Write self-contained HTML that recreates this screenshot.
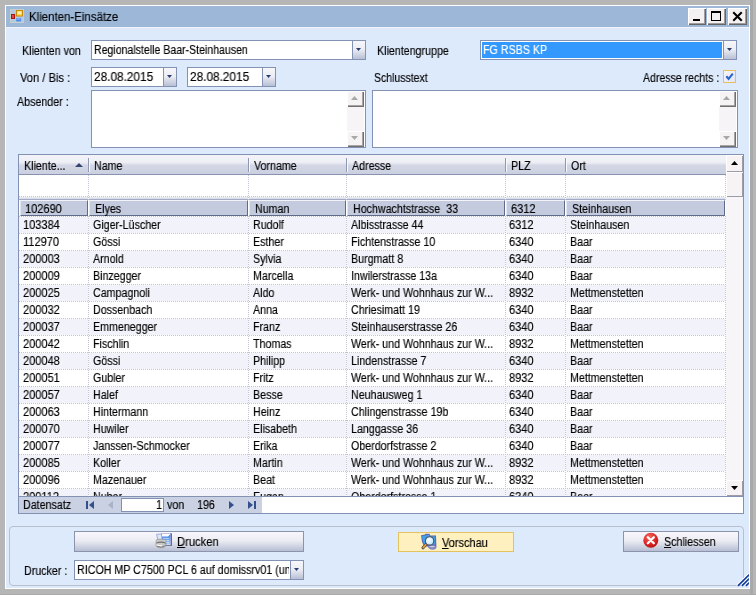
<!DOCTYPE html>
<html lang="de"><head><meta charset="utf-8"><title>Klienten-Einsätze</title>
<style>
html,body{margin:0;padding:0}
body{width:756px;height:595px;position:relative;overflow:hidden;background:#b6b6b6;font-family:"Liberation Sans",sans-serif;font-size:12px;line-height:14px}
div,span.t,svg{position:absolute}
span.t{white-space:pre;transform-origin:0 0;display:block;will-change:transform;-webkit-text-stroke:0.15px currentColor}
u{text-decoration:underline}
</style></head><body>
<div style="left:750px;top:0px;width:3px;height:595px;background:#a9a9a9"></div>
<div style="left:0px;top:594px;width:756px;height:1px;background:#a9a9a9"></div>
<div style="left:5px;top:5px;width:745px;height:584px;background:#fff"></div>
<div style="left:6px;top:6px;width:743px;height:582px;background:#ddeafc"></div>
<div style="left:6px;top:6px;width:743px;height:21px;background:#9cb7d7"></div>
<div style="left:6px;top:27px;width:743px;height:1px;background:#f4f3f9"></div>
<svg style="left:10px;top:9px" width="14" height="14" viewBox="0 0 14 14">
<rect x="0.5" y="0.5" width="13" height="13" fill="#b4c8e0" stroke="#dfe4b8" stroke-dasharray="1 1"/>
<rect x="1.5" y="5.5" width="3" height="4" fill="#e0483c" stroke="#a81810"/>
<rect x="6.5" y="1.5" width="6" height="5.5" fill="#ffd548" stroke="#c48a0c"/>
<rect x="7.6" y="2.5" width="3.6" height="2.6" fill="#fff0b0"/>
<rect x="6.3" y="9.2" width="4.6" height="3.2" fill="#4a86f0"/>
<rect x="7" y="9.6" width="3" height="1" fill="#9cc4ff"/>
</svg>
<span class="t " style="left:29px;top:10px;color:#000;transform:scaleX(0.955);">Klienten-Einsätze</span>
<div style="left:688px;top:8px;width:18px;height:17px;background:#f5f1f3;box-shadow:inset 1px 1px 0 #fff, inset -1px -1px 0 #666, inset -2px -2px 0 #a09c9e"><div style="left:5px;top:11px;width:7px;height:2px;background:#000"></div></div>
<div style="left:707px;top:8px;width:19px;height:17px;background:#f5f1f3;box-shadow:inset 1px 1px 0 #fff, inset -1px -1px 0 #666, inset -2px -2px 0 #a09c9e"><div style="left:4px;top:3px;width:10px;height:10px;border:1px solid #000;border-top-width:2px;box-sizing:border-box"></div></div>
<div style="left:728px;top:8px;width:19px;height:17px;background:#f5f1f3;box-shadow:inset 1px 1px 0 #fff, inset -1px -1px 0 #666, inset -2px -2px 0 #a09c9e"><svg style="left:4px;top:3px" width="11" height="11" viewBox="0 0 11 11"><path d="M2 2 L9 9 M9 2 L2 9" stroke="#000" stroke-width="2.1" stroke-linecap="square" fill="none"/></svg></div>
<span class="t " style="left:21.5px;top:44px;color:#000;transform:scaleX(0.89);">Klienten von</span>
<div style="left:91px;top:40px;width:275px;height:20px;background:#fff;border:1px solid #8392b2;box-sizing:border-box"></div>
<div style="left:352px;top:40px;width:14px;height:20px;border:1px solid #8392b2;box-sizing:border-box;background:linear-gradient(#f6f6fb,#eceef5 45%,#b9c0d5)"><svg style="left:3px;top:7px" width="5" height="3" viewBox="0 0 5 3"><path d="M0 0H5L2.5 3Z" fill="#2c3c6c"/></svg></div>
<div style="left:92px;top:41px;width:259px;height:18px;overflow:hidden">
<span class="t " style="left:2px;top:2px;color:#000;transform:scaleX(0.88);">Regionalstelle Baar-Steinhausen</span>
</div>
<span class="t " style="left:376.5px;top:44px;color:#000;transform:scaleX(0.89);">Klientengruppe</span>
<div style="left:480px;top:40px;width:257px;height:20px;background:#fff;border:1px solid #8392b2;box-sizing:border-box"></div>
<div style="left:723px;top:40px;width:14px;height:20px;border:1px solid #8392b2;box-sizing:border-box;background:linear-gradient(#f6f6fb,#eceef5 45%,#b9c0d5)"><svg style="left:3px;top:7px" width="5" height="3" viewBox="0 0 5 3"><path d="M0 0H5L2.5 3Z" fill="#2c3c6c"/></svg></div>
<div style="left:482px;top:42px;width:240px;height:16px;background:#3399ff"></div>
<div style="left:481px;top:41px;width:241px;height:18px;overflow:hidden">
<span class="t " style="left:2px;top:2px;color:#fff;transform:scaleX(0.89);">FG RSBS KP</span>
</div>
<span class="t " style="left:20px;top:71px;color:#000;transform:scaleX(0.93);">Von / Bis :</span>
<div style="left:91px;top:67px;width:86px;height:20px;background:#fff;border:1px solid #8392b2;box-sizing:border-box"></div>
<div style="left:163px;top:67px;width:14px;height:20px;border:1px solid #8392b2;box-sizing:border-box;background:linear-gradient(#f6f6fb,#eceef5 45%,#b9c0d5)"><svg style="left:3px;top:7px" width="5" height="3" viewBox="0 0 5 3"><path d="M0 0H5L2.5 3Z" fill="#2c3c6c"/></svg></div>
<div style="left:92px;top:68px;width:70px;height:18px;overflow:hidden">
<span class="t " style="left:2px;top:2px;color:#000;transform:scaleX(0.985);">28.08.2015</span>
</div>
<div style="left:187px;top:67px;width:89px;height:20px;background:#fff;border:1px solid #8392b2;box-sizing:border-box"></div>
<div style="left:262px;top:67px;width:14px;height:20px;border:1px solid #8392b2;box-sizing:border-box;background:linear-gradient(#f6f6fb,#eceef5 45%,#b9c0d5)"><svg style="left:3px;top:7px" width="5" height="3" viewBox="0 0 5 3"><path d="M0 0H5L2.5 3Z" fill="#2c3c6c"/></svg></div>
<div style="left:188px;top:68px;width:73px;height:18px;overflow:hidden">
<span class="t " style="left:2px;top:2px;color:#000;transform:scaleX(0.985);">28.08.2015</span>
</div>
<span class="t " style="left:373.5px;top:71px;color:#000;transform:scaleX(0.875);">Schlusstext</span>
<span class="t " style="left:643px;top:71px;color:#000;transform:scaleX(0.88);">Adresse rechts :</span>
<div style="left:723px;top:70px;width:13px;height:13px;background:linear-gradient(135deg,#f6f6fb,#e2e4f0);border:1px solid #e8bf5c;box-sizing:border-box"><svg style="left:1px;top:1px" width="9" height="9" viewBox="0 0 9 9"><path d="M1.3 4.2 L3.6 6.8 L7.8 1.6" stroke="#2a64cc" stroke-width="2.1" fill="none"/></svg></div>
<span class="t " style="left:17.3px;top:94.5px;color:#000;transform:scaleX(0.89);">Absender :</span>
<div style="left:91px;top:90px;width:275px;height:58px;background:#fff;border:1px solid #8392b2;box-sizing:border-box"></div>
<div style="left:347px;top:91px;width:17px;height:56px;background:#f6f4f6"></div>
<div style="left:347px;top:91px;width:17px;height:16px;background:#f6f3f5;box-shadow:inset 1px 1px 0 #fff, inset -1px -1px 0 #707070, inset -2px -2px 0 #a8a4a6"><svg style="left:4px;top:5px" width="7" height="4" viewBox="0 0 7 4"><path d="M0 4H7L3.5 0Z" fill="#a8a8a8"/></svg></div>
<div style="left:347px;top:131px;width:17px;height:16px;background:#f6f3f5;box-shadow:inset 1px 1px 0 #fff, inset -1px -1px 0 #707070, inset -2px -2px 0 #a8a4a6"><svg style="left:4px;top:5px" width="7" height="4" viewBox="0 0 7 4"><path d="M0 0H7L3.5 4Z" fill="#a8a8a8"/></svg></div>
<div style="left:372px;top:90px;width:366px;height:58px;background:#fff;border:1px solid #8392b2;box-sizing:border-box"></div>
<div style="left:719px;top:91px;width:17px;height:56px;background:#f6f4f6"></div>
<div style="left:719px;top:91px;width:17px;height:16px;background:#f6f3f5;box-shadow:inset 1px 1px 0 #fff, inset -1px -1px 0 #707070, inset -2px -2px 0 #a8a4a6"><svg style="left:4px;top:5px" width="7" height="4" viewBox="0 0 7 4"><path d="M0 4H7L3.5 0Z" fill="#a8a8a8"/></svg></div>
<div style="left:719px;top:131px;width:17px;height:16px;background:#f6f3f5;box-shadow:inset 1px 1px 0 #fff, inset -1px -1px 0 #707070, inset -2px -2px 0 #a8a4a6"><svg style="left:4px;top:5px" width="7" height="4" viewBox="0 0 7 4"><path d="M0 0H7L3.5 4Z" fill="#a8a8a8"/></svg></div>
<div style="left:18px;top:154px;width:726px;height:360px;background:#fff;border:1px solid #8392b2;box-sizing:border-box"></div>
<div style="left:19px;top:155px;width:707px;height:20px;background:linear-gradient(#f2f2f8,#efeff6 38%,#d3d7e5 55%,#cbd0e1);border-bottom:1px solid #8893b0;box-sizing:border-box"></div>
<span class="t " style="left:24px;top:159px;color:#000;transform:scaleX(0.89);">Kliente...</span>
<span class="t " style="left:93.5px;top:159px;color:#000;transform:scaleX(0.89);">Name</span>
<div style="left:88px;top:158px;width:1px;height:14px;background:#8f98b2"></div>
<div style="left:89px;top:158px;width:1px;height:14px;background:#f8f9fc"></div>
<span class="t " style="left:253.5px;top:159px;color:#000;transform:scaleX(0.89);">Vorname</span>
<div style="left:248px;top:158px;width:1px;height:14px;background:#8f98b2"></div>
<div style="left:249px;top:158px;width:1px;height:14px;background:#f8f9fc"></div>
<span class="t " style="left:351.5px;top:159px;color:#000;transform:scaleX(0.89);">Adresse</span>
<div style="left:346px;top:158px;width:1px;height:14px;background:#8f98b2"></div>
<div style="left:347px;top:158px;width:1px;height:14px;background:#f8f9fc"></div>
<span class="t " style="left:510.5px;top:159px;color:#000;transform:scaleX(0.89);">PLZ</span>
<div style="left:505px;top:158px;width:1px;height:14px;background:#8f98b2"></div>
<div style="left:506px;top:158px;width:1px;height:14px;background:#f8f9fc"></div>
<span class="t " style="left:570.5px;top:159px;color:#000;transform:scaleX(0.89);">Ort</span>
<div style="left:565px;top:158px;width:1px;height:14px;background:#8f98b2"></div>
<div style="left:566px;top:158px;width:1px;height:14px;background:#f8f9fc"></div>
<svg style="left:75px;top:163px" width="8" height="4" viewBox="0 0 8 4"><path d="M0 4H8L4 0Z" fill="#34446e"/></svg>
<div style="left:19px;top:196px;width:707px;height:1px;background:repeating-linear-gradient(90deg,#c0c4d5 0 1px,#fff 1px 2px)"></div>
<div style="left:19px;top:197px;width:707px;height:3px;background:linear-gradient(#eef0f6,#d5d9e6);border-bottom:1px solid #a2abc4;box-sizing:border-box"></div>
<div style="left:19px;top:200px;width:707px;height:296px;overflow:hidden">
<div style="left:0px;top:16px;width:707px;height:1px;background:repeating-linear-gradient(90deg,#c0c4d5 0 1px,#fff 1px 2px)"></div>
<div style="left:1px;top:0px;width:68px;height:16px;background:#c4cbdf;box-sizing:border-box;border-top:1px solid #f2f4f9;border-left:1px solid #e4e7f0;border-right:1px solid #5f6b88;border-bottom:1px solid #5f6b88"></div>
<span class="t " style="left:6px;top:2px;color:#000;transform:scaleX(0.92);">102690</span>
<div style="left:70px;top:0px;width:159px;height:16px;background:#c4cbdf;box-sizing:border-box;border-top:1px solid #f2f4f9;border-left:1px solid #e4e7f0;border-right:1px solid #5f6b88;border-bottom:1px solid #5f6b88"></div>
<span class="t " style="left:75.7px;top:2px;color:#000;transform:scaleX(0.89);">Elyes</span>
<div style="left:230px;top:0px;width:97px;height:16px;background:#c4cbdf;box-sizing:border-box;border-top:1px solid #f2f4f9;border-left:1px solid #e4e7f0;border-right:1px solid #5f6b88;border-bottom:1px solid #5f6b88"></div>
<span class="t " style="left:235.7px;top:2px;color:#000;transform:scaleX(0.89);">Numan</span>
<div style="left:328px;top:0px;width:158px;height:16px;background:#c4cbdf;box-sizing:border-box;border-top:1px solid #f2f4f9;border-left:1px solid #e4e7f0;border-right:1px solid #5f6b88;border-bottom:1px solid #5f6b88"></div>
<span class="t " style="left:333.7px;top:2px;color:#000;transform:scaleX(0.89);">Hochwachtstrasse  33</span>
<div style="left:487px;top:0px;width:59px;height:16px;background:#c4cbdf;box-sizing:border-box;border-top:1px solid #f2f4f9;border-left:1px solid #e4e7f0;border-right:1px solid #5f6b88;border-bottom:1px solid #5f6b88"></div>
<span class="t " style="left:492px;top:2px;color:#000;transform:scaleX(0.92);">6312</span>
<div style="left:547px;top:0px;width:159px;height:16px;background:#c4cbdf;box-sizing:border-box;border-top:1px solid #f2f4f9;border-left:1px solid #e4e7f0;border-right:1px solid #5f6b88;border-bottom:1px solid #5f6b88"></div>
<span class="t " style="left:552.7px;top:2px;color:#000;transform:scaleX(0.89);">Steinhausen</span>
<div style="left:0px;top:17px;width:707px;height:16px;background:#f2f2fa"></div>
<div style="left:0px;top:33px;width:707px;height:1px;background:repeating-linear-gradient(90deg,#c0c4d5 0 1px,#fff 1px 2px)"></div>
<span class="t " style="left:4.3px;top:18px;color:#000;transform:scaleX(0.92);">103384</span>
<span class="t " style="left:74px;top:18px;color:#000;transform:scaleX(0.89);">Giger-Lüscher</span>
<span class="t " style="left:234px;top:18px;color:#000;transform:scaleX(0.89);">Rudolf</span>
<span class="t " style="left:332px;top:18px;color:#000;transform:scaleX(0.89);">Albisstrasse 44</span>
<span class="t " style="left:490.3px;top:18px;color:#000;transform:scaleX(0.92);">6312</span>
<span class="t " style="left:551px;top:18px;color:#000;transform:scaleX(0.89);">Steinhausen</span>
<div style="left:0px;top:50px;width:707px;height:1px;background:repeating-linear-gradient(90deg,#c0c4d5 0 1px,#fff 1px 2px)"></div>
<span class="t " style="left:4.3px;top:35px;color:#000;transform:scaleX(0.92);">112970</span>
<span class="t " style="left:74px;top:35px;color:#000;transform:scaleX(0.89);">Gössi</span>
<span class="t " style="left:234px;top:35px;color:#000;transform:scaleX(0.89);">Esther</span>
<span class="t " style="left:332px;top:35px;color:#000;transform:scaleX(0.89);">Fichtenstrasse 10</span>
<span class="t " style="left:490.3px;top:35px;color:#000;transform:scaleX(0.92);">6340</span>
<span class="t " style="left:551px;top:35px;color:#000;transform:scaleX(0.89);">Baar</span>
<div style="left:0px;top:51px;width:707px;height:16px;background:#f2f2fa"></div>
<div style="left:0px;top:67px;width:707px;height:1px;background:repeating-linear-gradient(90deg,#c0c4d5 0 1px,#fff 1px 2px)"></div>
<span class="t " style="left:4.3px;top:52px;color:#000;transform:scaleX(0.92);">200003</span>
<span class="t " style="left:74px;top:52px;color:#000;transform:scaleX(0.89);">Arnold</span>
<span class="t " style="left:234px;top:52px;color:#000;transform:scaleX(0.89);">Sylvia</span>
<span class="t " style="left:332px;top:52px;color:#000;transform:scaleX(0.89);">Burgmatt 8</span>
<span class="t " style="left:490.3px;top:52px;color:#000;transform:scaleX(0.92);">6340</span>
<span class="t " style="left:551px;top:52px;color:#000;transform:scaleX(0.89);">Baar</span>
<div style="left:0px;top:84px;width:707px;height:1px;background:repeating-linear-gradient(90deg,#c0c4d5 0 1px,#fff 1px 2px)"></div>
<span class="t " style="left:4.3px;top:69px;color:#000;transform:scaleX(0.92);">200009</span>
<span class="t " style="left:74px;top:69px;color:#000;transform:scaleX(0.89);">Binzegger</span>
<span class="t " style="left:234px;top:69px;color:#000;transform:scaleX(0.89);">Marcella</span>
<span class="t " style="left:332px;top:69px;color:#000;transform:scaleX(0.89);">Inwilerstrasse 13a</span>
<span class="t " style="left:490.3px;top:69px;color:#000;transform:scaleX(0.92);">6340</span>
<span class="t " style="left:551px;top:69px;color:#000;transform:scaleX(0.89);">Baar</span>
<div style="left:0px;top:85px;width:707px;height:16px;background:#f2f2fa"></div>
<div style="left:0px;top:101px;width:707px;height:1px;background:repeating-linear-gradient(90deg,#c0c4d5 0 1px,#fff 1px 2px)"></div>
<span class="t " style="left:4.3px;top:86px;color:#000;transform:scaleX(0.92);">200025</span>
<span class="t " style="left:74px;top:86px;color:#000;transform:scaleX(0.89);">Campagnoli</span>
<span class="t " style="left:234px;top:86px;color:#000;transform:scaleX(0.89);">Aldo</span>
<span class="t " style="left:332px;top:86px;color:#000;transform:scaleX(0.89);">Werk- und Wohnhaus zur W...</span>
<span class="t " style="left:490.3px;top:86px;color:#000;transform:scaleX(0.92);">8932</span>
<span class="t " style="left:551px;top:86px;color:#000;transform:scaleX(0.89);">Mettmenstetten</span>
<div style="left:0px;top:118px;width:707px;height:1px;background:repeating-linear-gradient(90deg,#c0c4d5 0 1px,#fff 1px 2px)"></div>
<span class="t " style="left:4.3px;top:103px;color:#000;transform:scaleX(0.92);">200032</span>
<span class="t " style="left:74px;top:103px;color:#000;transform:scaleX(0.89);">Dossenbach</span>
<span class="t " style="left:234px;top:103px;color:#000;transform:scaleX(0.89);">Anna</span>
<span class="t " style="left:332px;top:103px;color:#000;transform:scaleX(0.89);">Chriesimatt 19</span>
<span class="t " style="left:490.3px;top:103px;color:#000;transform:scaleX(0.92);">6340</span>
<span class="t " style="left:551px;top:103px;color:#000;transform:scaleX(0.89);">Baar</span>
<div style="left:0px;top:119px;width:707px;height:16px;background:#f2f2fa"></div>
<div style="left:0px;top:135px;width:707px;height:1px;background:repeating-linear-gradient(90deg,#c0c4d5 0 1px,#fff 1px 2px)"></div>
<span class="t " style="left:4.3px;top:120px;color:#000;transform:scaleX(0.92);">200037</span>
<span class="t " style="left:74px;top:120px;color:#000;transform:scaleX(0.89);">Emmenegger</span>
<span class="t " style="left:234px;top:120px;color:#000;transform:scaleX(0.89);">Franz</span>
<span class="t " style="left:332px;top:120px;color:#000;transform:scaleX(0.89);">Steinhauserstrasse 26</span>
<span class="t " style="left:490.3px;top:120px;color:#000;transform:scaleX(0.92);">6340</span>
<span class="t " style="left:551px;top:120px;color:#000;transform:scaleX(0.89);">Baar</span>
<div style="left:0px;top:152px;width:707px;height:1px;background:repeating-linear-gradient(90deg,#c0c4d5 0 1px,#fff 1px 2px)"></div>
<span class="t " style="left:4.3px;top:137px;color:#000;transform:scaleX(0.92);">200042</span>
<span class="t " style="left:74px;top:137px;color:#000;transform:scaleX(0.89);">Fischlin</span>
<span class="t " style="left:234px;top:137px;color:#000;transform:scaleX(0.89);">Thomas</span>
<span class="t " style="left:332px;top:137px;color:#000;transform:scaleX(0.89);">Werk- und Wohnhaus zur W...</span>
<span class="t " style="left:490.3px;top:137px;color:#000;transform:scaleX(0.92);">8932</span>
<span class="t " style="left:551px;top:137px;color:#000;transform:scaleX(0.89);">Mettmenstetten</span>
<div style="left:0px;top:153px;width:707px;height:16px;background:#f2f2fa"></div>
<div style="left:0px;top:169px;width:707px;height:1px;background:repeating-linear-gradient(90deg,#c0c4d5 0 1px,#fff 1px 2px)"></div>
<span class="t " style="left:4.3px;top:154px;color:#000;transform:scaleX(0.92);">200048</span>
<span class="t " style="left:74px;top:154px;color:#000;transform:scaleX(0.89);">Gössi</span>
<span class="t " style="left:234px;top:154px;color:#000;transform:scaleX(0.89);">Philipp</span>
<span class="t " style="left:332px;top:154px;color:#000;transform:scaleX(0.89);">Lindenstrasse 7</span>
<span class="t " style="left:490.3px;top:154px;color:#000;transform:scaleX(0.92);">6340</span>
<span class="t " style="left:551px;top:154px;color:#000;transform:scaleX(0.89);">Baar</span>
<div style="left:0px;top:186px;width:707px;height:1px;background:repeating-linear-gradient(90deg,#c0c4d5 0 1px,#fff 1px 2px)"></div>
<span class="t " style="left:4.3px;top:171px;color:#000;transform:scaleX(0.92);">200051</span>
<span class="t " style="left:74px;top:171px;color:#000;transform:scaleX(0.89);">Gubler</span>
<span class="t " style="left:234px;top:171px;color:#000;transform:scaleX(0.89);">Fritz</span>
<span class="t " style="left:332px;top:171px;color:#000;transform:scaleX(0.89);">Werk- und Wohnhaus zur W...</span>
<span class="t " style="left:490.3px;top:171px;color:#000;transform:scaleX(0.92);">8932</span>
<span class="t " style="left:551px;top:171px;color:#000;transform:scaleX(0.89);">Mettmenstetten</span>
<div style="left:0px;top:187px;width:707px;height:16px;background:#f2f2fa"></div>
<div style="left:0px;top:203px;width:707px;height:1px;background:repeating-linear-gradient(90deg,#c0c4d5 0 1px,#fff 1px 2px)"></div>
<span class="t " style="left:4.3px;top:188px;color:#000;transform:scaleX(0.92);">200057</span>
<span class="t " style="left:74px;top:188px;color:#000;transform:scaleX(0.89);">Halef</span>
<span class="t " style="left:234px;top:188px;color:#000;transform:scaleX(0.89);">Besse</span>
<span class="t " style="left:332px;top:188px;color:#000;transform:scaleX(0.89);">Neuhausweg 1</span>
<span class="t " style="left:490.3px;top:188px;color:#000;transform:scaleX(0.92);">6340</span>
<span class="t " style="left:551px;top:188px;color:#000;transform:scaleX(0.89);">Baar</span>
<div style="left:0px;top:220px;width:707px;height:1px;background:repeating-linear-gradient(90deg,#c0c4d5 0 1px,#fff 1px 2px)"></div>
<span class="t " style="left:4.3px;top:205px;color:#000;transform:scaleX(0.92);">200063</span>
<span class="t " style="left:74px;top:205px;color:#000;transform:scaleX(0.89);">Hintermann</span>
<span class="t " style="left:234px;top:205px;color:#000;transform:scaleX(0.89);">Heinz</span>
<span class="t " style="left:332px;top:205px;color:#000;transform:scaleX(0.89);">Chlingenstrasse 19b</span>
<span class="t " style="left:490.3px;top:205px;color:#000;transform:scaleX(0.92);">6340</span>
<span class="t " style="left:551px;top:205px;color:#000;transform:scaleX(0.89);">Baar</span>
<div style="left:0px;top:221px;width:707px;height:16px;background:#f2f2fa"></div>
<div style="left:0px;top:237px;width:707px;height:1px;background:repeating-linear-gradient(90deg,#c0c4d5 0 1px,#fff 1px 2px)"></div>
<span class="t " style="left:4.3px;top:222px;color:#000;transform:scaleX(0.92);">200070</span>
<span class="t " style="left:74px;top:222px;color:#000;transform:scaleX(0.89);">Huwiler</span>
<span class="t " style="left:234px;top:222px;color:#000;transform:scaleX(0.89);">Elisabeth</span>
<span class="t " style="left:332px;top:222px;color:#000;transform:scaleX(0.89);">Langgasse 36</span>
<span class="t " style="left:490.3px;top:222px;color:#000;transform:scaleX(0.92);">6340</span>
<span class="t " style="left:551px;top:222px;color:#000;transform:scaleX(0.89);">Baar</span>
<div style="left:0px;top:254px;width:707px;height:1px;background:repeating-linear-gradient(90deg,#c0c4d5 0 1px,#fff 1px 2px)"></div>
<span class="t " style="left:4.3px;top:239px;color:#000;transform:scaleX(0.92);">200077</span>
<span class="t " style="left:74px;top:239px;color:#000;transform:scaleX(0.89);">Janssen-Schmocker</span>
<span class="t " style="left:234px;top:239px;color:#000;transform:scaleX(0.89);">Erika</span>
<span class="t " style="left:332px;top:239px;color:#000;transform:scaleX(0.89);">Oberdorfstrasse 2</span>
<span class="t " style="left:490.3px;top:239px;color:#000;transform:scaleX(0.92);">6340</span>
<span class="t " style="left:551px;top:239px;color:#000;transform:scaleX(0.89);">Baar</span>
<div style="left:0px;top:255px;width:707px;height:16px;background:#f2f2fa"></div>
<div style="left:0px;top:271px;width:707px;height:1px;background:repeating-linear-gradient(90deg,#c0c4d5 0 1px,#fff 1px 2px)"></div>
<span class="t " style="left:4.3px;top:256px;color:#000;transform:scaleX(0.92);">200085</span>
<span class="t " style="left:74px;top:256px;color:#000;transform:scaleX(0.89);">Koller</span>
<span class="t " style="left:234px;top:256px;color:#000;transform:scaleX(0.89);">Martin</span>
<span class="t " style="left:332px;top:256px;color:#000;transform:scaleX(0.89);">Werk- und Wohnhaus zur W...</span>
<span class="t " style="left:490.3px;top:256px;color:#000;transform:scaleX(0.92);">8932</span>
<span class="t " style="left:551px;top:256px;color:#000;transform:scaleX(0.89);">Mettmenstetten</span>
<div style="left:0px;top:288px;width:707px;height:1px;background:repeating-linear-gradient(90deg,#c0c4d5 0 1px,#fff 1px 2px)"></div>
<span class="t " style="left:4.3px;top:273px;color:#000;transform:scaleX(0.92);">200096</span>
<span class="t " style="left:74px;top:273px;color:#000;transform:scaleX(0.89);">Mazenauer</span>
<span class="t " style="left:234px;top:273px;color:#000;transform:scaleX(0.89);">Beat</span>
<span class="t " style="left:332px;top:273px;color:#000;transform:scaleX(0.89);">Werk- und Wohnhaus zur W...</span>
<span class="t " style="left:490.3px;top:273px;color:#000;transform:scaleX(0.92);">8932</span>
<span class="t " style="left:551px;top:273px;color:#000;transform:scaleX(0.89);">Mettmenstetten</span>
<div style="left:0px;top:289px;width:707px;height:16px;background:#f2f2fa"></div>
<div style="left:0px;top:305px;width:707px;height:1px;background:repeating-linear-gradient(90deg,#c0c4d5 0 1px,#fff 1px 2px)"></div>
<span class="t " style="left:4.3px;top:290px;color:#000;transform:scaleX(0.92);">200112</span>
<span class="t " style="left:74px;top:290px;color:#000;transform:scaleX(0.89);">Nuber</span>
<span class="t " style="left:234px;top:290px;color:#000;transform:scaleX(0.89);">Eugen</span>
<span class="t " style="left:332px;top:290px;color:#000;transform:scaleX(0.89);">Oberdorfstrasse 1</span>
<span class="t " style="left:490.3px;top:290px;color:#000;transform:scaleX(0.92);">6340</span>
<span class="t " style="left:551px;top:290px;color:#000;transform:scaleX(0.89);">Baar</span>
</div>
<div style="left:88px;top:175px;width:1px;height:25px;background:repeating-linear-gradient(#c0c4d5 0 1px,#fff 1px 2px)"></div>
<div style="left:88px;top:216px;width:1px;height:280px;background:repeating-linear-gradient(#c0c4d5 0 1px,#fff 1px 2px)"></div>
<div style="left:248px;top:175px;width:1px;height:25px;background:repeating-linear-gradient(#c0c4d5 0 1px,#fff 1px 2px)"></div>
<div style="left:248px;top:216px;width:1px;height:280px;background:repeating-linear-gradient(#c0c4d5 0 1px,#fff 1px 2px)"></div>
<div style="left:346px;top:175px;width:1px;height:25px;background:repeating-linear-gradient(#c0c4d5 0 1px,#fff 1px 2px)"></div>
<div style="left:346px;top:216px;width:1px;height:280px;background:repeating-linear-gradient(#c0c4d5 0 1px,#fff 1px 2px)"></div>
<div style="left:505px;top:175px;width:1px;height:25px;background:repeating-linear-gradient(#c0c4d5 0 1px,#fff 1px 2px)"></div>
<div style="left:505px;top:216px;width:1px;height:280px;background:repeating-linear-gradient(#c0c4d5 0 1px,#fff 1px 2px)"></div>
<div style="left:565px;top:175px;width:1px;height:25px;background:repeating-linear-gradient(#c0c4d5 0 1px,#fff 1px 2px)"></div>
<div style="left:565px;top:216px;width:1px;height:280px;background:repeating-linear-gradient(#c0c4d5 0 1px,#fff 1px 2px)"></div>
<div style="left:725px;top:175px;width:1px;height:25px;background:repeating-linear-gradient(#c0c4d5 0 1px,#fff 1px 2px)"></div>
<div style="left:725px;top:216px;width:1px;height:280px;background:repeating-linear-gradient(#c0c4d5 0 1px,#fff 1px 2px)"></div>
<div style="left:726px;top:155px;width:17px;height:341px;background:#f7f5f7"></div>
<div style="left:726px;top:155px;width:17px;height:17px;background:#f7f3f5;box-shadow:inset 1px 1px 0 #fff, inset -1px -1px 0 #9c9ca6"><svg style="left:5px;top:6px" width="7" height="4" viewBox="0 0 7 4"><path d="M0 4H7L3.5 0Z" fill="#000"/></svg></div>
<div style="left:726px;top:172px;width:17px;height:25px;background:#f7f3f5;box-shadow:inset 1px 1px 0 #fff, inset -1px -1px 0 #9c9ca6"></div>
<div style="left:726px;top:480px;width:17px;height:16px;background:#f7f3f5;box-shadow:inset 1px 1px 0 #fff, inset -1px -1px 0 #9c9ca6"><svg style="left:5px;top:6px" width="7" height="4" viewBox="0 0 7 4"><path d="M0 0H7L3.5 4Z" fill="#000"/></svg></div>
<div style="left:19px;top:496px;width:724px;height:1px;background:#8392b2"></div>
<div style="left:19px;top:497px;width:243px;height:16px;background:#c9d1e2"></div>
<span class="t " style="left:23px;top:498px;color:#000;transform:scaleX(0.89);">Datensatz</span>
<svg style="left:86px;top:501px" width="9" height="8" viewBox="0 0 9 8"><rect x="0" y="0" width="2" height="8" fill="#34508c"/><path d="M8 0V8L3 4Z" fill="#34508c"/></svg>
<svg style="left:108px;top:501px" width="5" height="8" viewBox="0 0 5 8"><path d="M5 0V8L0 4Z" fill="#a9b2c8"/></svg>
<div style="left:121px;top:498px;width:43px;height:14px;background:#fff;border:1px solid #8392b2;box-sizing:border-box"></div>
<span class="t " style="left:156px;top:498px;color:#000;transform:scaleX(0.89);">1</span>
<span class="t " style="left:167px;top:498px;color:#000;transform:scaleX(0.89);">von</span>
<span class="t " style="left:196.5px;top:498px;color:#000;transform:scaleX(0.89);">196</span>
<svg style="left:229px;top:501px" width="5" height="8" viewBox="0 0 5 8"><path d="M0 0V8L5 4Z" fill="#34508c"/></svg>
<svg style="left:247px;top:501px" width="9" height="8" viewBox="0 0 9 8"><rect x="7" y="0" width="2" height="8" fill="#34508c"/><path d="M1 0V8L6 4Z" fill="#34508c"/></svg>
<div style="left:9px;top:526px;width:735px;height:60px;border:1px solid #b9bfcc;border-radius:4px;box-sizing:border-box"></div>
<div style="left:74px;top:531px;width:230px;height:21px;box-sizing:border-box;border:1px solid #8a94ad;background:linear-gradient(#f7f7fb,#ecedf4 45%,#b7bed3)"></div>
<svg style="left:155px;top:533px" width="18" height="16" viewBox="0 0 18 16">
<defs><linearGradient id="gd" x1="0" y1="0" x2="0" y2="1"><stop offset="0" stop-color="#2f7fe6"/><stop offset="1" stop-color="#b4d0fa"/></linearGradient></defs>
<rect x="6.5" y="0.5" width="10.5" height="12.3" fill="#606468"/>
<rect x="6" y="0.3" width="10.3" height="12" fill="#7a7cc0"/>
<rect x="6.3" y="0.5" width="9" height="11.5" fill="#fdfdff"/>
<path d="M7 3.6 H13 L15.3 1.2 V11.8 H7Z" fill="url(#gd)"/>
<path d="M8 5.5H14M8 7.5H14M8 9.5H14" stroke="#e4efff" stroke-width=".7" opacity=".8"/>
<path d="M1.5 1.3 L6.4 1 L7.2 6.8 L3 7 Z" fill="#dbe8fb" stroke="#8c8cd0" stroke-width=".7"/>
<path d="M1 8.2 Q1 6.2 3.5 6.2 H8.5 Q11 6.2 11 8.2 V12 Q11 14.8 6 14.8 Q1 14.8 1 12 Z" fill="#c9c9c9" stroke="#8a8a8a" stroke-width=".6"/>
<path d="M1.4 9.6 Q6 7.6 10.6 9.6 L10.6 10.6 Q6 8.8 1.4 10.6Z" fill="#6e6e6e"/>
<path d="M1.6 11.6 Q4 13.4 7 12.6" stroke="#fff" stroke-width="1.1" fill="none"/>
<path d="M2 13.2 Q6 15.4 10.4 12.6" stroke="#7c7c7c" stroke-width="1" fill="none"/>
<rect x="9.8" y="10" width="1.2" height="1.2" fill="#58c848"/>
</svg>
<span class="t " style="left:177px;top:535px;color:#000;transform:scaleX(0.935);"><u>D</u>rucken</span>
<div style="left:398px;top:532px;width:116px;height:20px;box-sizing:border-box;border:1px solid #e6c25e;background:#fff0c0"></div>
<svg style="left:420px;top:533px" width="18" height="18" viewBox="0 0 18 18">
<defs><radialGradient id="gl" cx=".4" cy=".35" r=".7"><stop offset="0" stop-color="#ffffff"/><stop offset="1" stop-color="#b8e2fb"/></radialGradient></defs>
<path d="M1 2.2 L5 1.6 L5.6 0.8 L9.4 0.8 L10.4 2.6 L16 2.6 L16.4 13 L13 14.5 L4 13 L2 9 Z" fill="#6068b0"/>
<path d="M2 3 L5.4 2.4 L9 1.8 L10 3.6 L15 3.6 L15.2 11.5 L4.4 11.8 L3 8.6 Z" fill="#3fa0ec"/>
<path d="M7.5 13.2 Q12 11.4 16.6 13.2 Q17 16.6 12.6 16.8 Q8.6 16.6 7.5 13.2Z" fill="#8288c0"/>
<path d="M8.6 13.6 Q12 12.4 15.4 13.6 Q13 15 8.6 13.6Z" fill="#d9dcf0"/>
<path d="M6 11.4 L3 14.8" stroke="#45454d" stroke-width="3" stroke-linecap="round"/>
<path d="M5.8 11.6 L3.2 14.6" stroke="#ee9a36" stroke-width="1.7" stroke-linecap="round"/>
<circle cx="9.6" cy="7.9" r="4.2" fill="url(#gl)" stroke="#4c505c" stroke-width="1.1"/>
</svg>
<span class="t " style="left:442px;top:535.5px;color:#000;transform:scaleX(0.915);"><u>V</u>orschau</span>
<div style="left:623px;top:531px;width:116px;height:21px;box-sizing:border-box;border:1px solid #8a94ad;background:linear-gradient(#f7f7fb,#ecedf4 45%,#b7bed3)"></div>
<svg style="left:643px;top:532px" width="16" height="16" viewBox="0 0 16 16">
<defs><radialGradient id="gr" cx=".4" cy=".3" r=".8"><stop offset="0" stop-color="#f46a5c"/><stop offset=".6" stop-color="#dc2222"/><stop offset="1" stop-color="#a80c0c"/></radialGradient></defs>
<circle cx="7.8" cy="8.2" r="7.5" fill="url(#gr)"/>
<path d="M4.8 5.2 L10.8 11.2 M10.8 5.2 L4.8 11.2" stroke="#fff" stroke-width="2.3" stroke-linecap="round"/>
</svg>
<span class="t " style="left:664px;top:535px;color:#000;transform:scaleX(0.89);"><u>S</u>chliessen</span>
<span class="t " style="left:24px;top:564px;color:#000;transform:scaleX(0.89);">Drucker :</span>
<div style="left:74px;top:560px;width:230px;height:20px;background:#fff;border:1px solid #8392b2;box-sizing:border-box"></div>
<div style="left:290px;top:560px;width:14px;height:20px;border:1px solid #8392b2;box-sizing:border-box;background:linear-gradient(#f6f6fb,#eceef5 45%,#b9c0d5)"><svg style="left:3px;top:7px" width="5" height="3" viewBox="0 0 5 3"><path d="M0 0H5L2.5 3Z" fill="#2c3c6c"/></svg></div>
<div style="left:75px;top:561px;width:214px;height:18px;overflow:hidden">
<span class="t " style="left:2px;top:2px;color:#000;transform:scaleX(0.89);">RICOH MP C7500 PCL 6 auf domissrv01 (um</span>
</div>
<svg style="left:736px;top:572px" width="13" height="15" viewBox="0 0 13 15">
<path d="M1.2 13 L12.2 2 M5.2 13 L12.2 6 M9.2 13 L12.2 10" stroke="#fff" stroke-width="1.3" stroke-linecap="round"/>
<path d="M2.4 13.4 L12.8 3 M6.4 13.4 L12.8 7 M10.4 13.4 L12.8 11" stroke="#123d98" stroke-width="1.6" stroke-linecap="round"/>
</svg>
</body></html>
